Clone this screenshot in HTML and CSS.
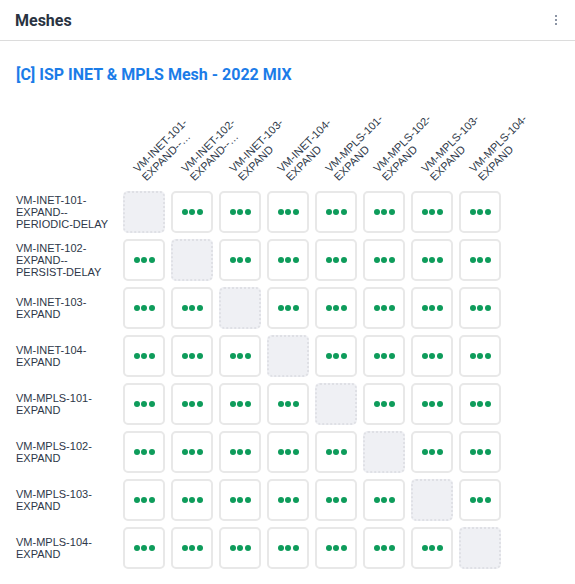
FILE: index.html
```html
<!DOCTYPE html>
<html>
<head>
<meta charset="utf-8" />
<title>Meshes</title>
<link rel="stylesheet" href="styles.css">
</head>
<body>
<div class="panel">
	<div class="panel-head">
		<h2>Meshes</h2>
		<span class="kebab"><i></i><i></i><i></i></span>
	</div>
	<div class="panel-body">
		<h3 class="mesh-title">[C] ISP INET &amp; MPLS Mesh - 2022 MIX</h3>
		<div class="matrix" id="matrix"></div>
	</div>
</div>
<script>
	var agents = [
		"VM-INET-101-EXPAND--PERIODIC-DELAY",
		"VM-INET-102-EXPAND--PERSIST-DELAY",
		"VM-INET-103-EXPAND",
		"VM-INET-104-EXPAND",
		"VM-MPLS-101-EXPAND",
		"VM-MPLS-102-EXPAND",
		"VM-MPLS-103-EXPAND",
		"VM-MPLS-104-EXPAND"
	];
	function splitName(name) {
		var m = name.match(/^(VM-[A-Z]+-\d+-)(.*)$/);
		return [m[1], m[2]];
	}
	var html = '<div class="corner"></div>';
	for (var i = 0; i < agents.length; i++) {
		var p = splitName(agents[i]);
		html += '<div class="col-head"><div class="rot"><div class="line">' + p[0] + '</div><div class="line cut">' + p[1] + '</div></div></div>';
	}
	for (var r = 0; r < agents.length; r++) {
		var q = splitName(agents[r]);
		html += '<div class="row-head">' + q[0] + '<br>' + q[1].replace("EXPAND--", "EXPAND--<br>") + '</div>';
		for (var c = 0; c < agents.length; c++) {
			if (r == c) {
				html += '<div class="cell self"></div>';
			} else {
				html += '<div class="cell"><span class="dots"><i></i><i></i><i></i></span></div>';
			}
		}
	}
	document.getElementById("matrix").innerHTML = html;
</script>
</body>
</html>
```

FILE: styles.css
```css
html, body {
	padding: 0;
	margin: 0;
	background: #fff;
}
.panel {
	font-family: Roboto, "Noto Sans", sans-serif;
}
.panel-head {
	height: 40px;
	border-bottom: 1px solid #dcdcdc;
	display: flex;
	align-items: center;
	justify-content: space-between;
	padding: 0 18px 0 15px;
}
.panel-head h2 {
	margin: 0;
	font-size: 16px;
	font-weight: 700;
	color: #2a3342;
}
.kebab {
	display: flex;
	flex-direction: column;
	gap: 2px;
}
.kebab i {
	width: 2px;
	height: 2px;
	background: #8c95a5;
}
.panel-body {
	padding: 24px 16px 16px 16px;
}
.mesh-title {
	margin: 0 0 10px 0;
	font-size: 16px;
	line-height: 20px;
	font-weight: 700;
	color: #1b7ce8;
}
.matrix {
	display: grid;
	grid-template-columns: 101px repeat(8, 42px);
	grid-template-rows: 90px;
	grid-auto-rows: 42px;
	gap: 6px;
	font-family: "Liberation Sans", Arial, sans-serif;
	font-size: 11px;
	line-height: 12px;
	color: #2d3748;
}
.col-head {
	display: flex;
	align-items: flex-end;
}
.rot {
	flex-shrink: 0;
	width: 80px;
	margin: 0 0 2px 25px;
	transform: rotate(-45deg);
	transform-origin: left bottom;
}
.line {
	white-space: nowrap;
}
.line.cut {
	width: 66px;
	overflow: hidden;
	text-overflow: ellipsis;
}
.row-head {
	align-self: center;
}
.cell {
	box-sizing: border-box;
	border: 2px solid #e8e8e8;
	border-radius: 5px;
	display: flex;
	align-items: center;
	justify-content: center;
}
.cell.self {
	background: #eff0f4;
	border: 2px dotted #dfe0e5;
}
.dots {
	display: flex;
	gap: 1.5px;
}
.dots i {
	width: 6px;
	height: 6px;
	border-radius: 50%;
	background: #0e9c5b;
}
```
